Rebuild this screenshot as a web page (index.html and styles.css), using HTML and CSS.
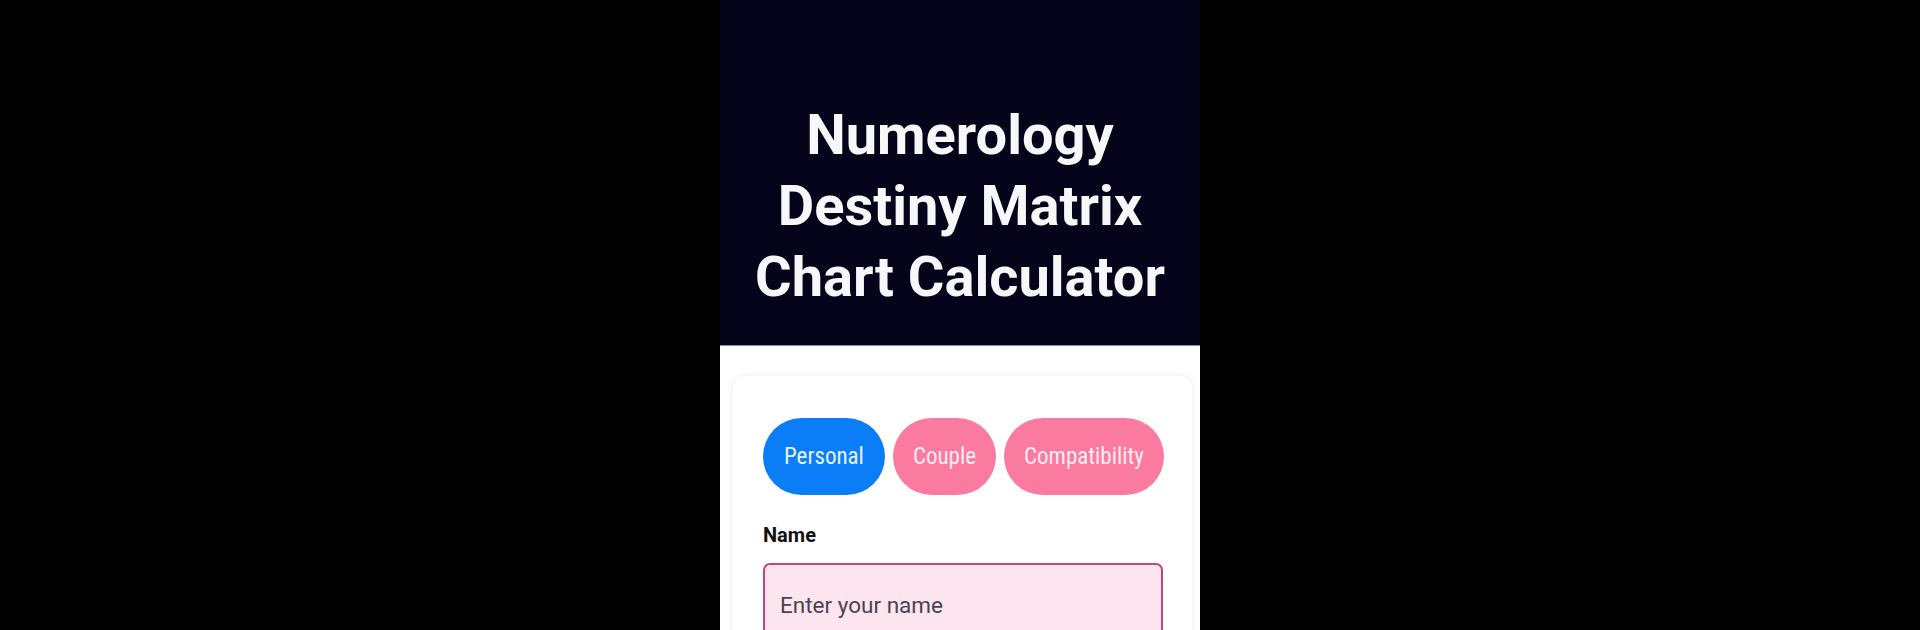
FILE: index.html
```html
<!DOCTYPE html>
<html lang="en">
<head>
<meta charset="utf-8">
<title>Numerology Destiny Matrix Chart Calculator</title>
<link rel="stylesheet" href="styles.css">
</head>
<body>
<div class="phone">
  <header class="hero">
    <h1 class="hero-title">Numerology<br>Destiny Matrix<br>Chart Calculator</h1>
  </header>
  <main class="content">
    <section class="card">
      <div class="tabs">
        <button class="tab tab-active">Personal</button>
        <button class="tab">Couple</button>
        <button class="tab">Compatibility</button>
      </div>
      <label class="field-label" for="name">Name</label>
      <div class="input-box">
        <input id="name" class="input" type="text" placeholder="Enter your name">
      </div>
    </section>
  </main>
</div>
</body>
</html>
```

FILE: styles.css
```css
html, body {
  margin: 0;
  padding: 0;
  background: #000;
  height: 100%;
  overflow: hidden;
}

body {
  font-family: Roboto, "Liberation Sans", sans-serif;
}

.phone {
  width: 480px;
  margin: 0 auto;
  min-height: 100%;
  background: #fff;
}

.hero {
  height: 346px;
  background: #05041a;
  border-bottom: 1px solid #8d8c99;
  padding-top: 100px;
  box-sizing: border-box;
}

.hero-title {
  margin: 0;
  color: #f7f7f9;
  font-family: Roboto, "Liberation Sans", sans-serif;
  font-weight: 700;
  font-size: 56px;
  line-height: 71px;
  text-align: center;
  letter-spacing: 0;
}

.content {
  padding: 30px 8px 0 13px;
  background: #fff;
}

.card {
  background: #fff;
  border-radius: 12px;
  box-shadow: 0 0 6px rgba(0, 0, 0, 0.09);
  padding: 42px 29px 40px 30px;
}

.tabs {
  display: flex;
  gap: 8px;
}

.tab {
  height: 77px;
  border: none;
  border-radius: 39px;
  padding: 0 20px;
  background: #fa7aa0;
  color: #fdeef3;
  font-family: "Roboto Condensed", Roboto, sans-serif;
  font-stretch: condensed;
  font-size: 23px;
  line-height: 1;
}

.tab-active {
  padding: 0 21px;
  background: #0b7df6;
  color: #eaf2ff;
}

.field-label {
  display: block;
  margin-top: 28px;
  color: #111;
  font-weight: 700;
  font-size: 20px;
  line-height: 24px;
}

.input-box {
  margin-top: 16px;
  border: 2px solid #c4457c;
  border-radius: 7px;
  background: #fde5ef;
  padding: 27px 15px 30px;
}

.input {
  display: block;
  width: 100%;
  border: none;
  outline: none;
  background: transparent;
  padding: 0;
  font-family: Roboto, sans-serif;
  font-size: 22.5px;
  line-height: 27px;
  color: #333;
}

.input::placeholder {
  color: #4a4450;
}
```
